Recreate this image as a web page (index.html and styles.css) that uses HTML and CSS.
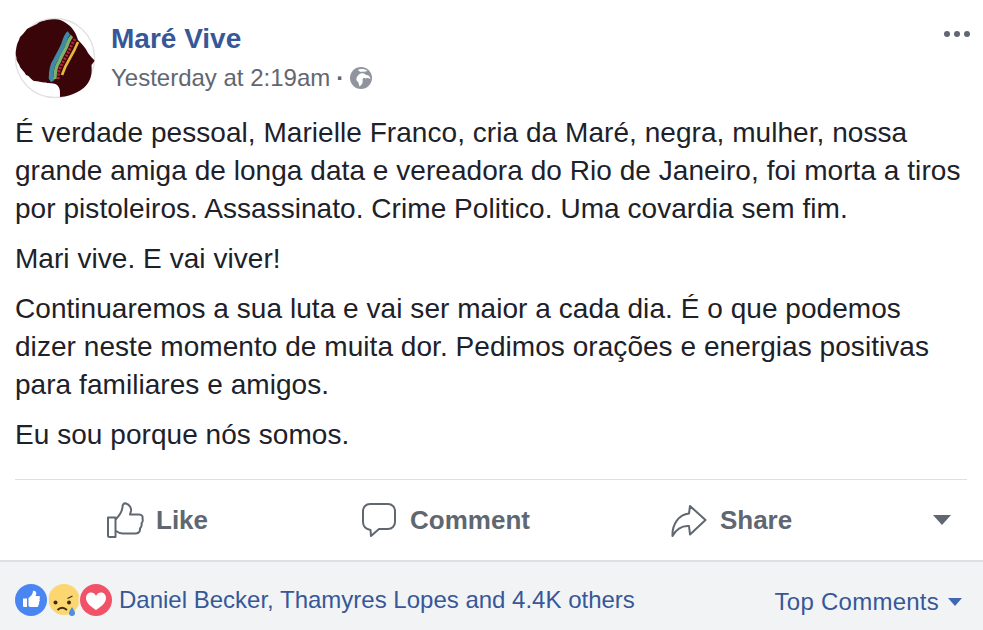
FILE: index.html
```html
<!DOCTYPE html>
<html lang="pt">
<head>
<meta charset="utf-8">
<title>Maré Vive</title>
<link rel="stylesheet" href="styles.css">
</head>
<body>
<article class="post">
  <header class="head">
    <svg class="avatar" viewBox="14 16 84 84" width="84" height="84" aria-hidden="true">
      <circle cx="55" cy="58" r="39.5" fill="#fff" stroke="#e2e2e2" stroke-width="1.4"/>
      <path fill="#3a0508" d="M60 97 C60 92 60.500 88 57 85 C54 82.500 49 84 46 82.500 C42 83 39 81 34 81 C30 79 30 76 26 75 C24 71 22 70 20 67 C19 63 16 61 16.500 58 C15 54 16 50 16.500 47 C17 43 19 41 20 37 C23 34 25 32 27 29 C31 27 34 25 37 24 C40 21 44 21 47 20 C51 19 54 19 58 19.500 C62 20 66 23 70 26 C73 29 76 33 78 40 C82 44 86 48 88 53 C90 56 92.500 58 94.500 60.500 C94 62 92.500 63.500 91.500 65 C92 72 91.500 78 88 83 C84 90 72 96 60 97 Z"/>
      <path fill="none" stroke="#3f8ba6" stroke-width="4.500" d="M69 33 C66 35 65 40 63.500 44 C61 50 58 55 55.500 60 C52 65 51 70 51 78 L53 81"/>
      <path fill="none" stroke="#7cb26e" stroke-width="3.400" d="M72 36 C69 39 68 43 66.500 47 C64 52 61 57 59 62 C56 66 55 71 55 79"/>
      <path fill="none" stroke="#b4243f" stroke-width="3" stroke-dasharray="2.200 1.300" d="M75 39 C73 42 71 46 69.500 50 C67 55 64 60 62 64 C59 69 58 74 58 80"/>
      <path fill="none" stroke="#e5b83f" stroke-width="2.600" d="M78 42 C76 47 73 53 70 58 C67 63 64 69 62 75"/>
    </svg>
    <div class="meta">
      <a class="name">Maré Vive</a>
      <div class="time">
        <span>Yesterday at 2:19am</span><span class="sep">·</span>
        <svg class="globe" viewBox="0 0 22 22" width="22" height="22" aria-hidden="true">
          <circle cx="11" cy="11" r="11" fill="#90949c"/>
          <path fill="#fff" d="M8 3 C10 1.500 15 1.500 17.500 4 C15 4.500 14 5 12.500 4.500 C11 5.500 9 4.500 8 3 Z M9.500 7 C11 5.500 15 6 16 8 C18 7.500 20 9 20.500 12 C18 11 17 10.500 15.500 11.500 C14 10 13 11 12.500 13 C13.500 15.500 11.500 18 9.500 19.500 C8.500 17 9 15 7 14 C5.500 12 7 9 9.500 7 Z"/>
        </svg>
      </div>
    </div>
    <svg class="dots" viewBox="0 0 26 6" width="26" height="6" aria-hidden="true">
      <circle cx="3" cy="3" r="3"/><circle cx="13" cy="3" r="3"/><circle cx="23" cy="3" r="3"/>
    </svg>
  </header>

  <div class="message">
    <p>É verdade pessoal, Marielle Franco, cria da Maré, negra, mulher, nossa grande amiga de longa data e vereadora do Rio de Janeiro, foi morta a tiros por pistoleiros. Assassinato. Crime Politico. Uma covardia sem fim.</p>
    <p>Mari vive. E vai viver!</p>
    <p>Continuaremos a sua luta e vai ser maior a cada dia. É o que podemos dizer neste momento de muita dor. Pedimos orações e energias positivas para familiares e amigos.</p>
    <p>Eu sou porque nós somos.</p>
  </div>

  <nav class="actions">
    <a class="action like">
      <svg viewBox="107 502 37 37" width="37" height="37" aria-hidden="true">
        <path class="line" d="M108 517.500 H115.500 V537 H109.500 Q108 537 108 535.500 Z"/>
        <path class="line" d="M116 519 C119 516 122 512 122.500 507 C122.500 504 124 503 126 503.500 C129.500 504.500 131.500 508 131 511 L130 514.500 H139 C142 514.500 143 516.500 142.500 518.500 C143 520.500 142.500 522.500 141.500 523.500 C142 525.500 141 527.500 140 528.500 C140.300 531 139 533.500 136 533.500 H123 C120 533.500 118 532.500 116 531"/>
      </svg>
      <span>Like</span>
    </a>
    <a class="action comment">
      <svg viewBox="362 503 35 36" width="35" height="36" aria-hidden="true">
        <path class="line" d="M370 505 H388 C392 505 395 508 395 512 V523 C395 527 392 530 388 530 H379 L371 537 L370.500 531 C366 530 363 527 363 523 V512 C363 508 366 505 370 505 Z"/>
      </svg>
      <span>Comment</span>
    </a>
    <a class="action share">
      <svg viewBox="672 503 36 33" width="36" height="33" aria-hidden="true">
        <path class="line" d="M691 505 L706.500 519 L691 533.500 L690 525 C683 524.500 677 528.500 673.500 535 C673 523 680 513.500 690 512.500 Z"/>
      </svg>
      <span>Share</span>
    </a>
    <svg class="more" viewBox="0 0 18 10" width="18" height="10" aria-hidden="true"><path d="M0 0 H18 L9 10 Z"/></svg>
  </nav>

  <footer class="foot">
    <svg class="reactions" viewBox="14 583 98 34" width="98" height="34" aria-hidden="true">
      <circle cx="64" cy="599.500" r="15.500" fill="#fcd670"/>
      <circle cx="55.500" cy="602.500" r="2" fill="#3c2c10"/>
      <circle cx="69" cy="602.500" r="2" fill="#3c2c10"/>
      <path fill="none" stroke="#3c2c10" stroke-width="1.800" d="M57.500 610 Q62 605.500 67 610"/>
      <path fill="none" stroke="#3c2c10" stroke-width="1.200" d="M67.500 598.500 L72.500 596"/>
      <path fill="#4a8fe0" d="M72 607 Q69 611.500 69 613 A3 3 0 0 0 75 613 Q75 611.500 72 607 Z"/>
      <circle cx="31" cy="600" r="17.500" fill="#f2f3f5"/>
      <circle cx="31" cy="600" r="16" fill="#4a86f2"/>
      <path fill="#fff" d="M23 598.500 H27 V607 H24 Q23 607 23 606 Z M28.500 598 C31 596 33 594 33 591 C35 590 36.500 592 36.300 594 L35.500 596 H38.500 C40.500 596 40 598 39.500 599 C40 600 40 601 39 602 C39.500 603 39 604.500 38.500 605 C38.500 606.500 37.500 607 36.500 607 H31 C30 607 29 606.500 28.500 606 Z"/>
      <circle cx="96" cy="600" r="17.500" fill="#f2f3f5"/>
      <circle cx="96" cy="600" r="16" fill="#f25268"/>
      <path fill="#fff" d="M96 610 C90 606 86 602.500 86 598 C86 594.500 88.500 592.500 91 592.500 C93 592.500 95 593.500 96 596 C97 593.500 99 592.500 101 592.500 C103.500 592.500 106 594.500 106 598 C106 602.500 102 606 96 610 Z"/>
    </svg>
    <a class="people">Daniel Becker, Thamyres Lopes and 4.4K others</a>
    <a class="sort">Top Comments<svg viewBox="0 0 14 8" width="14" height="8" aria-hidden="true"><path d="M0 0 H14 L7 8 Z"/></svg></a>
  </footer>
</article>
</body>
</html>
```

FILE: styles.css
```css
html, body {
  margin: 0;
  padding: 0;
  background: #fff;
}
body {
  width: 983px;
  height: 630px;
  overflow: hidden;
  font-family: "Liberation Sans", Arial, sans-serif;
  color: #1d2129;
}
.post {
  display: flex;
  flex-direction: column;
  height: 630px;
}
.head {
  display: flex;
  align-items: flex-start;
  padding: 16px 13px 0 14px;
  height: 98px;
  box-sizing: border-box;
}
.avatar {
  flex: none;
}
.meta {
  margin-left: 13px;
  padding-top: 7px;
}
.name {
  display: block;
  font-size: 28px;
  line-height: 32px;
  font-weight: 700;
  color: #365899;
}
.time {
  display: flex;
  align-items: center;
  margin-top: 10px;
  font-size: 24px;
  line-height: 26px;
  color: #616770;
}
.sep {
  margin: 0 6px;
  font-weight: 700;
}
.globe {
  flex: none;
}
.dots {
  margin: 15px 0 0 auto;
  fill: #606770;
}
.message {
  padding: 16px 20px 0 15px;
  font-size: 28px;
  line-height: 38px;
  letter-spacing: 0.05px;
}
.message p {
  margin: 0 0 12px;
}
.actions {
  display: flex;
  align-items: center;
  margin: 13px 16px 0 15px;
  height: 81px;
  box-sizing: border-box;
  border-top: 1px solid #dddfe2;
  color: #606770;
  font-size: 26px;
  font-weight: 700;
}
.action {
  display: flex;
  align-items: center;
  gap: 13px;
}
.like {
  gap: 12px;
  margin-left: 92px;
}
.line {
  fill: none;
  stroke: #606770;
  stroke-width: 2;
  stroke-linejoin: round;
  stroke-linecap: round;
}
.comment {
  margin-left: 154px;
}
.share {
  margin-left: 141px;
}
.more {
  margin-left: auto;
  margin-right: 16px;
  fill: #606770;
}
.foot {
  flex: 1;
  display: flex;
  align-items: center;
  padding: 8px 21px 0 14px;
  background: #f2f3f5;
  border-top: 2px solid #dddfe2;
  color: #365899;
  font-size: 24px;
}
.reactions {
  flex: none;
}
.people {
  margin-left: 7px;
}
.sort {
  display: flex;
  align-items: center;
  gap: 9px;
  margin-left: auto;
  padding-top: 3px;
  letter-spacing: 0.25px;
  fill: #4267b2;
}
```
